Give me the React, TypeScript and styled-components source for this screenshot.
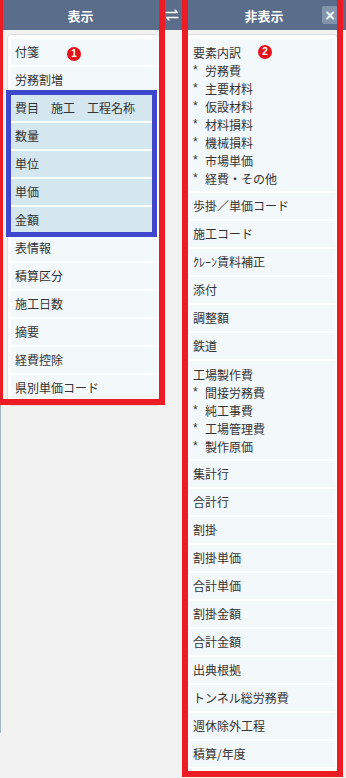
import React from "react";
import styled, { createGlobalStyle } from "styled-components";

const GlobalStyle = createGlobalStyle`
  html, body {
    margin: 0;
    padding: 0;
    background: #f2f2f2;
  }
  body {
    font-family: "Noto Sans CJK JP", "Noto Sans", sans-serif;
    color: #333;
  }
`;

const Page = styled.div`
  position: relative;
  display: flex;
  width: 346px;
  height: 778px;
  overflow: hidden;
  background: #f2f2f2;
`;

const Column = styled.div<{ $width: number; $edge?: boolean }>`
  box-sizing: border-box;
  width: ${({ $width }) => $width}px;
  flex-shrink: 0;
  display: flex;
  flex-direction: column;
  align-self: flex-start;
  height: ${({ $edge }) => ($edge ? "733px" : "auto")};
  border-left: ${({ $edge }) => ($edge ? "1px solid #a3b7cb" : "none")};
`;

const Header = styled.div`
  position: relative;
  height: 30px;
  display: flex;
  align-items: center;
  justify-content: center;
  background: #5a6e8b;
  color: #fff;
  font-size: 13px;
  font-weight: bold;
`;

const Gap = styled.div`
  width: 22px;
  flex-shrink: 0;
`;

const GapHead = styled.div`
  height: 30px;
  display: flex;
  align-items: center;
  justify-content: center;
  background: #5a6e8b;
  padding-left: 2px;
`;

const CloseButton = styled.div`
  position: absolute;
  right: 8px;
  top: 6px;
  width: 16px;
  height: 18px;
  border-radius: 2px;
  background: #8295ad;
  color: #fff;
  font-size: 14px;
  font-weight: bold;
  line-height: 18px;
  text-align: center;
  font-family: "DejaVu Sans", sans-serif;
`;

const Card = styled.div<{ $margin: string; $pad: string }>`
  margin: ${({ $margin }) => $margin};
  padding: ${({ $pad }) => $pad};
  background: #fff;
  border: 1px solid #dcdfe3;
  border-radius: 4px;
  display: flex;
  flex-direction: column;
  gap: 2px;
`;

const Selected = styled.div`
  position: relative;
  display: flex;
  flex-direction: column;
  gap: 2px;

  &::after {
    content: "";
    position: absolute;
    top: -5px;
    bottom: -4px;
    left: -5px;
    right: 0;
    border: 5px solid #3f48cc;
    pointer-events: none;
  }
`;

const Item = styled.div<{ $selected?: boolean }>`
  height: 26px;
  line-height: 26px;
  padding: 0 4px;
  font-size: 12px;
  color: #333;
  white-space: nowrap;
  background: ${({ $selected }) => ($selected ? "#d4e6ee" : "#f3f8fb")};
`;

const GroupItem = styled.div`
  padding: 4px;
  background: #f3f8fb;
`;

const Line = styled.div`
  height: 18px;
  display: flex;
  align-items: center;
  font-size: 12px;
  color: #333;
  white-space: nowrap;
`;

const Star = styled.span`
  display: inline-block;
  width: 12px;
  font-family: "Liberation Sans", sans-serif;
`;

const Badge = styled.span<{ $gap: number }>`
  display: inline-flex;
  align-items: center;
  justify-content: center;
  width: 14px;
  height: 14px;
  margin-left: ${({ $gap }) => $gap}px;
  margin-top: -1px;
  border-radius: 50%;
  background: #e3121b;
  color: #fff;
  font-family: "Liberation Sans", sans-serif;
  font-size: 10px;
  font-weight: bold;
  line-height: 14px;
`;

const Annotation = styled.div<{ $l: number; $t: number; $w: number; $h: number }>`
  position: absolute;
  left: ${({ $l }) => $l}px;
  top: ${({ $t }) => $t}px;
  width: ${({ $w }) => $w}px;
  height: ${({ $h }) => $h}px;
  box-sizing: border-box;
  border: 6px solid #ed1c24;
  pointer-events: none;
`;

const SwapIcon = () => (
  <svg width="14" height="12" viewBox="0 0 14 12" fill="none" stroke="#fff" strokeWidth="1.3" strokeLinecap="round">
    <path d="M1 3.5h11.5M10 1l2.5 2.5" />
    <path d="M13 8.5H1.5M4 11L1.5 8.5" />
  </svg>
);

const leftItems = ["表情報", "積算区分", "施工日数", "摘要", "経費控除", "県別単価コード"];
const selectedItems = ["費目　施工　工程名称", "数量", "単位", "単価", "金額"];
const elementLines = ["労務費", "主要材料", "仮設材料", "材料損料", "機械損料", "市場単価", "経費・その他"];
const rightMid = ["歩掛／単価コード", "施工コード", "ｸﾚｰﾝ賃料補正", "添付", "調整額", "鉄道"];
const factoryLines = ["間接労務費", "純工事費", "工場管理費", "製作原価"];
const rightTail = [
  "集計行",
  "合計行",
  "割掛",
  "割掛単価",
  "合計単価",
  "割掛金額",
  "合計金額",
  "出典根拠",
  "トンネル総労務費",
  "週休除外工程",
  "積算/年度",
];

export default function App() {
  return (
    <>
      <GlobalStyle />
      <Page>
        <Column $width={160} $edge>
          <Header>表示</Header>
          <Card $margin="4px 0 0 6px" $pad="4px 2px 4px 3px">
            <Item>
              付箋
              <Badge $gap={28}>1</Badge>
            </Item>
            <Item>労務割増</Item>
            <Selected>
              {selectedItems.map((t) => (
                <Item key={t} $selected>
                  {t}
                </Item>
              ))}
            </Selected>
            {leftItems.map((t) => (
              <Item key={t}>{t}</Item>
            ))}
          </Card>
        </Column>

        <Gap>
          <GapHead>
            <SwapIcon />
          </GapHead>
        </Gap>

        <Column $width={164}>
          <Header>
            非表示
            <CloseButton>×</CloseButton>
          </Header>
          <Card $margin="4px 8px 0 4px" $pad="4px 2px">
            <GroupItem>
              <Line>
                要素内訳
                <Badge $gap={17}>2</Badge>
              </Line>
              {elementLines.map((t) => (
                <Line key={t}>
                  <Star>*</Star>
                  {t}
                </Line>
              ))}
            </GroupItem>
            {rightMid.map((t) => (
              <Item key={t}>{t}</Item>
            ))}
            <GroupItem>
              <Line>工場製作費</Line>
              {factoryLines.map((t) => (
                <Line key={t}>
                  <Star>*</Star>
                  {t}
                </Line>
              ))}
            </GroupItem>
            {rightTail.map((t) => (
              <Item key={t}>{t}</Item>
            ))}
          </Card>
        </Column>

        <Annotation $l={-3} $t={-6} $w={168} $h={411} />
        <Annotation $l={182} $t={-6} $w={161} $h={783} />
      </Page>
    </>
  );
}
